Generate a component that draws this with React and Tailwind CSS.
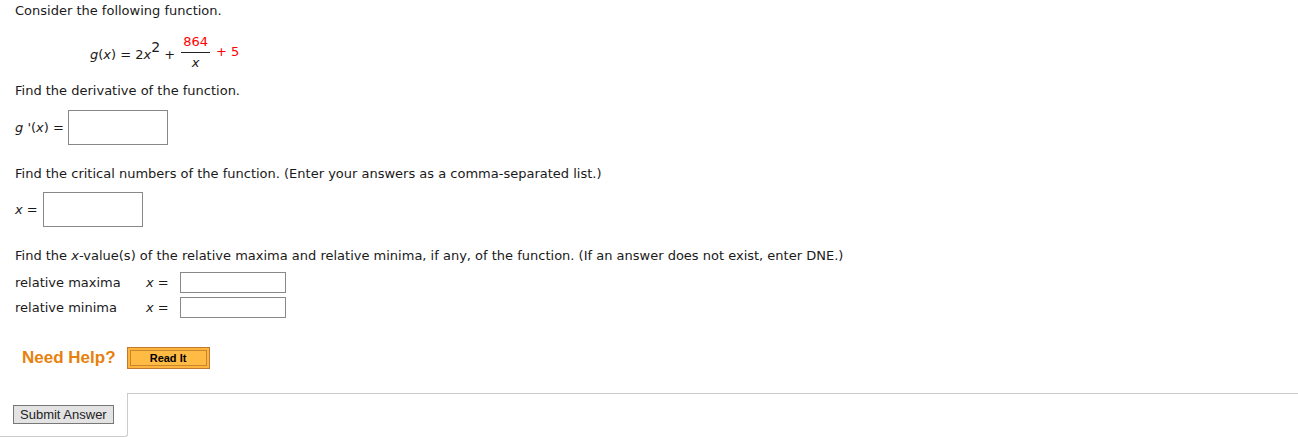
export default function App() {
  const verdana = { fontFamily: '"DejaVu Sans", Verdana, sans-serif' };
  const arial = { fontFamily: '"Liberation Sans", Arial, sans-serif' };
  return (
    <div className="bg-white text-[13px] text-[#1a1a1a] w-[1298px] h-[437px] overflow-hidden" style={verdana}>
      <div className="pl-[15px]">
        <p className="h-[22px] leading-[22px]">Consider the following function.</p>

        <div className="flex items-center pl-[75px] h-[60px]">
          <span>
            <i>g</i>(<i>x</i>) = 2<i>x</i>
            <span className="text-[14px] align-[7px] leading-none">2</span> +
          </span>
          <span className="inline-flex flex-col items-center mx-[6px]">
            <span className="text-[#f00] border-b border-[#222] px-[2px] leading-[20px]">864</span>
            <i className="leading-[20px]">x</i>
          </span>
          <span className="text-[#f00]">+ 5</span>
        </div>

        <p className="h-[18px] leading-[18px]">Find the derivative of the function.</p>

        <div className="flex items-center mt-[10px] h-[35px] gap-[4px]">
          <span><i>g</i> '(<i>x</i>) =</span>
          <div className="w-[100px] h-[35px] border border-[#888] bg-white" />
        </div>

        <p className="mt-[20px] h-[18px] leading-[18px]">Find the critical numbers of the function. (Enter your answers as a comma-separated list.)</p>

        <div className="flex items-center mt-[9px] h-[35px] gap-[5px]">
          <span><i>x</i> =</span>
          <div className="w-[100px] h-[35px] border border-[#888] bg-white" />
        </div>

        <p className="mt-[20px] h-[18px] leading-[18px]">Find the <i>x</i>-value(s) of the relative maxima and relative minima, if any, of the function. (If an answer does not exist, enter DNE.)</p>

        <div className="mt-[7px] flex flex-col gap-[4px]">
          <div className="flex items-center h-[21px]">
            <span className="w-[131px]">relative maxima</span>
            <span className="w-[34px]"><i>x</i> =</span>
            <div className="w-[106px] h-[21px] border border-[#888] bg-white" />
          </div>
          <div className="flex items-center h-[21px]">
            <span className="w-[131px]">relative minima</span>
            <span className="w-[34px]"><i>x</i> =</span>
            <div className="w-[106px] h-[21px] border border-[#888] bg-white" />
          </div>
        </div>

        <div className="flex items-center mt-[29px] h-[22px] pl-[7px] gap-[11px]" style={arial}>
          <span className="text-[#e8800c] font-bold text-[17px]">Need Help?</span>
          <div className="w-[83px] h-[22px] border border-[#c07a30] bg-[#ffb43c] p-[2px]">
            <div className="w-full h-full border border-[#c98630] bg-[#ffbb44] flex items-center justify-center text-[11px] font-bold text-black">
              Read It
            </div>
          </div>
        </div>
      </div>

      <div className="flex mt-[24px]">
        <div className="w-[128px] h-[44px] border-r border-b border-[#ccc] rounded-br-[3px] flex items-center pl-[13px]">
          <button
            className="h-[19px] px-[6px] border border-[#777] bg-[#e3e3e3] text-[13px] text-[#222] leading-[16px]"
            style={arial}
          >
            Submit Answer
          </button>
        </div>
        <div className="flex-1 border-t border-[#ccc] h-[44px]" />
      </div>
    </div>
  );
}
